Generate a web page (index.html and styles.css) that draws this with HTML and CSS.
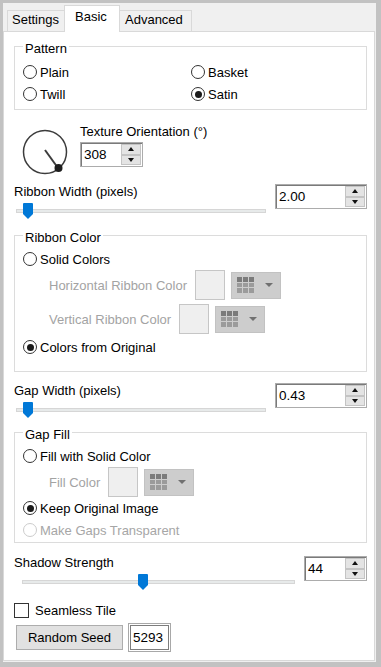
FILE: index.html
```html
<!DOCTYPE html>
<html>
<head>
<meta charset="UTF-8">
<title>Weave</title>
<link rel="stylesheet" href="styles.css">
</head>
<body>

<div class="tabs">
	<div class="tab tab-settings">Settings</div>
	<div class="tab tab-basic">Basic</div>
	<div class="tab tab-advanced">Advanced</div>
</div>

<div class="panel">

	<fieldset class="group group-pattern">
		<legend>Pattern</legend>
		<div class="radio-grid">
			<div class="radio"><span class="dot"></span>Plain</div>
			<div class="radio"><span class="dot"></span>Basket</div>
			<div class="radio"><span class="dot"></span>Twill</div>
			<div class="radio checked"><span class="dot"></span>Satin</div>
		</div>
	</fieldset>

	<div class="orient">
		<svg class="dial" viewBox="0 0 50 50" width="50" height="50">
			<circle cx="25" cy="25" r="21.5" fill="none" stroke="#3c3c3c" stroke-width="1.5"/>
			<line x1="25" y1="23" x2="38" y2="41" stroke="#3c3c3c" stroke-width="2"/>
			<circle cx="38.5" cy="41" r="4" fill="#1e1e1e"/>
		</svg>
		<div class="orient-side">
			<div class="label">Texture Orientation (°)</div>
			<div class="spin spin-orient">
				<div class="spin-text">308</div>
				<div class="spin-btns"><span class="up"></span><span class="down"></span></div>
			</div>
		</div>
	</div>

	<div class="range-row">
		<div class="label">Ribbon Width (pixels)</div>
		<div class="spin">
			<div class="spin-text">2.00</div>
			<div class="spin-btns"><span class="up"></span><span class="down"></span></div>
		</div>
		<div class="slider slider-ribbon">
			<div class="track"></div>
			<svg class="thumb" style="left: 7px" viewBox="0 0 10 16" width="10" height="16"><path d="M0 1 Q0 0 1 0 H9 Q10 0 10 1 V11 L5 16 L0 11 Z" fill="#0078d7"/></svg>
		</div>
	</div>

	<fieldset class="group group-ribbon">
		<legend>Ribbon Color</legend>
		<div class="radio first"><span class="dot"></span>Solid Colors</div>
		<div class="color-row">
			<span>Horizontal Ribbon Color</span>
			<span class="swatch"></span>
			<span class="color-btn">
				<svg viewBox="0 0 17 16" width="17" height="16">
					<rect x="0" y="0" width="5" height="5" fill="#7b7b7b"/><rect x="6" y="0" width="5" height="5" fill="#7b7b7b"/><rect x="12" y="0" width="5" height="5" fill="#7b7b7b"/>
					<rect x="0" y="6" width="5" height="4" fill="#9b9b9b"/><rect x="6" y="6" width="5" height="4" fill="#9b9b9b"/><rect x="12" y="6" width="5" height="4" fill="#9b9b9b"/>
					<rect x="0" y="11" width="5" height="5" fill="#9b9b9b"/><rect x="6" y="11" width="5" height="5" fill="#9b9b9b"/><rect x="12" y="11" width="5" height="5" fill="#9b9b9b"/>
				</svg>
				<span class="caret"></span>
			</span>
		</div>
		<div class="color-row">
			<span>Vertical Ribbon Color</span>
			<span class="swatch"></span>
			<span class="color-btn">
				<svg viewBox="0 0 17 16" width="17" height="16">
					<rect x="0" y="0" width="5" height="5" fill="#7b7b7b"/><rect x="6" y="0" width="5" height="5" fill="#7b7b7b"/><rect x="12" y="0" width="5" height="5" fill="#7b7b7b"/>
					<rect x="0" y="6" width="5" height="4" fill="#9b9b9b"/><rect x="6" y="6" width="5" height="4" fill="#9b9b9b"/><rect x="12" y="6" width="5" height="4" fill="#9b9b9b"/>
					<rect x="0" y="11" width="5" height="5" fill="#9b9b9b"/><rect x="6" y="11" width="5" height="5" fill="#9b9b9b"/><rect x="12" y="11" width="5" height="5" fill="#9b9b9b"/>
				</svg>
				<span class="caret"></span>
			</span>
		</div>
		<div class="radio checked last"><span class="dot"></span>Colors from Original</div>
	</fieldset>

	<div class="range-row range-gap">
		<div class="label">Gap Width (pixels)</div>
		<div class="spin">
			<div class="spin-text">0.43</div>
			<div class="spin-btns"><span class="up"></span><span class="down"></span></div>
		</div>
		<div class="slider slider-ribbon">
			<div class="track"></div>
			<svg class="thumb" style="left: 7px" viewBox="0 0 10 16" width="10" height="16"><path d="M0 1 Q0 0 1 0 H9 Q10 0 10 1 V11 L5 16 L0 11 Z" fill="#0078d7"/></svg>
		</div>
	</div>

	<fieldset class="group group-fill">
		<legend>Gap Fill</legend>
		<div class="radio first"><span class="dot"></span>Fill with Solid Color</div>
		<div class="color-row">
			<span>Fill Color</span>
			<span class="swatch"></span>
			<span class="color-btn">
				<svg viewBox="0 0 17 16" width="17" height="16">
					<rect x="0" y="0" width="5" height="5" fill="#7b7b7b"/><rect x="6" y="0" width="5" height="5" fill="#7b7b7b"/><rect x="12" y="0" width="5" height="5" fill="#7b7b7b"/>
					<rect x="0" y="6" width="5" height="4" fill="#9b9b9b"/><rect x="6" y="6" width="5" height="4" fill="#9b9b9b"/><rect x="12" y="6" width="5" height="4" fill="#9b9b9b"/>
					<rect x="0" y="11" width="5" height="5" fill="#9b9b9b"/><rect x="6" y="11" width="5" height="5" fill="#9b9b9b"/><rect x="12" y="11" width="5" height="5" fill="#9b9b9b"/>
				</svg>
				<span class="caret"></span>
			</span>
		</div>
		<div class="radio checked"><span class="dot"></span>Keep Original Image</div>
		<div class="radio disabled"><span class="dot"></span>Make Gaps Transparent</div>
	</fieldset>

	<div class="range-row range-shadow">
		<div class="label">Shadow Strength</div>
		<div class="spin">
			<div class="spin-text">44</div>
			<div class="spin-btns"><span class="up"></span><span class="down"></span></div>
		</div>
		<div class="slider slider-shadow">
			<div class="track"></div>
			<svg class="thumb" style="left: 116px" viewBox="0 0 10 16" width="10" height="16"><path d="M0 1 Q0 0 1 0 H9 Q10 0 10 1 V11 L5 16 L0 11 Z" fill="#0078d7"/></svg>
		</div>
	</div>

	<div class="check-row"><span class="box"></span>Seamless Tile</div>

	<div class="seed-row">
		<div class="button">Random Seed</div>
		<div class="seed">5293</div>
	</div>

</div>

</body>
</html>
```

FILE: styles.css
```css
* {
	box-sizing: border-box;
}

html, body {
	margin: 0;
}

body {
	width: 381px;
	height: 667px;
	border-style: solid;
	border-color: #c2c2c2;
	border-width: 3px 5px 5px 3px;
	background: #f0f0f0;
	font-family: "Liberation Sans", Arial, sans-serif;
	font-size: 13px;
	color: #000;
	display: flex;
	flex-direction: column;
	overflow: hidden;
}

/* tab strip */
.tabs {
	height: 28px;
	flex: none;
	display: flex;
	align-items: flex-end;
	padding-left: 4px;
}

.tab {
	height: 21px;
	border: 1px solid #d9d9d9;
	border-bottom: none;
	background: #f0f0f0;
	line-height: 18px;
}

.tab-settings {
	width: 57px;
	border-right: none;
	padding-left: 4px;
}

.tab-basic {
	width: 56px;
	height: 27px;
	margin-bottom: -1px;
	background: #fff;
	position: relative;
	z-index: 1;
	line-height: 22px;
	padding-left: 10px;
}

.tab-advanced {
	width: 72px;
	border-left: none;
	padding-left: 5px;
}

.panel {
	flex: 1;
	margin: 0 1px 1px 0;
	background: #fff;
	border: 1px solid #d9d9d9;
	padding: 0 7px 0 10px;
}

/* group boxes */
.group {
	margin: 7px 0 0 0;
	padding: 0 0 13px 8px;
	border: 1px solid #dcdcdc;
	min-width: 0;
}

.group legend {
	padding: 5px 2px 0 2px;
	line-height: 14px;
}

.group-pattern {
	margin-top: 5px;
	padding-bottom: 4px;
}

.group-fill {
	margin-top: 5px;
	padding-bottom: 1px;
}

.radio-grid {
	display: grid;
	grid-template-columns: 168px 1fr;
	margin-top: 5px;
}

.radio {
	display: flex;
	align-items: center;
	height: 22px;
	gap: 3px;
}

.radio.first {
	margin-top: 3px;
}

.radio.last {
	margin-top: 2px;
}

.dot {
	width: 14px;
	height: 14px;
	flex: none;
	border: 1px solid #333;
	border-radius: 50%;
	background: #fff;
	position: relative;
}

.radio.checked .dot::after {
	content: "";
	position: absolute;
	inset: 2.5px;
	border-radius: 50%;
	background: #1a1a1a;
}

.radio.disabled {
	color: #a6a6a6;
}

.radio.disabled .dot {
	border-color: #cccccc;
}

/* color pickers */
.color-row {
	display: flex;
	align-items: center;
	height: 30px;
	padding-left: 26px;
	color: #a3a3a3;
}

.color-row + .color-row {
	margin-top: 4px;
}

.swatch {
	width: 30px;
	height: 30px;
	margin-left: 8px;
	border: 1px solid #c6c6c6;
	background: #efefef;
}

.color-btn {
	width: 50px;
	height: 27px;
	margin-left: 6px;
	background: #cdcdcd;
	border: 1px solid #c2c2c2;
	display: flex;
	align-items: center;
	padding-left: 5px;
}

.color-btn svg {
	display: block;
}

.caret {
	margin-left: 11px;
	border-left: 4px solid transparent;
	border-right: 4px solid transparent;
	border-top: 4px solid #707070;
}

/* orientation */
.orient {
	display: flex;
	margin-top: 15px;
}

.dial {
	flex: none;
	margin: 2px 0 0 6px;
}

.orient-side {
	margin-left: 10px;
}

.label {
	line-height: 14px;
}

.spin {
	display: flex;
	height: 25px;
	background: #fff;
	border: 1px solid #acacac;
	box-shadow: inset 1px 1px 0 #7a7a7a;
	font-size: 13.5px;
}

.spin-orient {
	width: 63px;
	margin-top: 3px;
}

.spin-text {
	flex: 1;
	padding-left: 3px;
	line-height: 23px;
}

.spin-btns {
	width: 20px;
	display: flex;
	flex-direction: column;
	margin: 1px 1px 1px 0;
}

.spin-btns span {
	flex: 1;
	background: #e4e4e4;
	border: 1px solid #c4c4c4;
	display: flex;
	align-items: center;
	justify-content: center;
}

.spin-btns .up::before {
	content: "";
	border-left: 3.5px solid transparent;
	border-right: 3.5px solid transparent;
	border-bottom: 4px solid #111;
}

.spin-btns .down::before {
	content: "";
	border-left: 3.5px solid transparent;
	border-right: 3.5px solid transparent;
	border-top: 4px solid #111;
}

/* sliders */
.range-row {
	display: grid;
	grid-template-columns: 1fr 92px;
	column-gap: 9px;
	margin-top: 7px;
}

.range-row .label {
	margin-top: 1px;
}

.range-row .spin {
	grid-column: 2;
	grid-row: 1 / 3;
	align-self: start;
}

.range-gap {
	margin-top: 11px;
}

.range-shadow {
	grid-template-columns: 1fr 63px;
	column-gap: 10px;
	margin-top: 13px;
}

.range-shadow .label {
	margin-top: 0;
}

.slider {
	grid-column: 1;
	grid-row: 2;
	height: 16px;
	margin-top: 4px;
	position: relative;
}

.slider-ribbon {
	margin-left: 2px;
}

.slider-shadow {
	margin-left: 8px;
	margin-right: -1px;
}

.track {
	height: 4px;
	margin-top: 6px;
	background: #e7eaea;
	border: 1px solid #d6d6d6;
}

.thumb {
	position: absolute;
	top: 0;
	display: block;
}

/* bottom */
.check-row {
	display: flex;
	align-items: center;
	height: 18px;
	margin-top: 11px;
	gap: 6px;
}

.box {
	width: 15px;
	height: 15px;
	border: 1px solid #333;
	background: #fff;
}

.seed-row {
	display: flex;
	align-items: center;
	height: 29px;
	margin-top: 4px;
}

.button {
	width: 107px;
	height: 25px;
	margin-left: 2px;
	background: #e1e1e1;
	border: 1px solid #adadad;
	text-align: center;
	line-height: 23px;
}

.seed {
	width: 43px;
	height: 29px;
	margin-left: 5px;
	border: 1px solid #a8a8a8;
	box-shadow: inset 0 0 0 1px #fff, inset 0 0 0 2px #7d7d7d;
	padding-left: 4px;
	line-height: 27px;
	font-size: 13.5px;
}
```
